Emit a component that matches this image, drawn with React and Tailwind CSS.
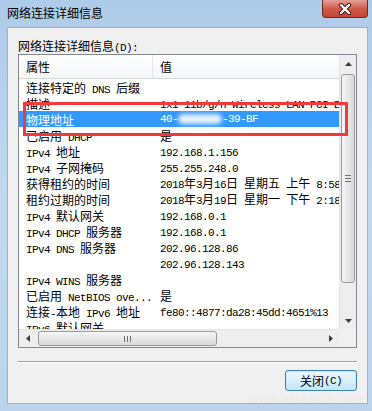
import React from "react";

const CJK = "font-['Noto_Sans_CJK_SC',sans-serif] text-[12px]";
const LAT = "font-['Liberation_Mono',monospace] text-[11px] tracking-[-0.6px]";

function T({ s }) {
  const parts = s.split(/([\u0000-\u00ff]+)/).filter((p) => p !== "");
  return (
    <>
      {parts.map((p, i) =>
        /[\u0000-\u00ff]/.test(p) ? (
          <span key={i} className={LAT + " whitespace-pre"}>
            {p}
          </span>
        ) : (
          <span key={i} className={CJK}>
            {p}
          </span>
        )
      )}
    </>
  );
}

const rows = [
  ["连接特定的 DNS 后缀", ""],
  ["描述", "1x1 11b/g/n Wireless LAN PCI Express Half Mini Card Adapter"],
  ["物理地址", "MAC"],
  ["已启用 DHCP", "是"],
  ["IPv4 地址", "192.168.1.156"],
  ["IPv4 子网掩码", "255.255.248.0"],
  ["获得租约的时间", "2018年3月16日 星期五 上午 8:58:21"],
  ["租约过期的时间", "2018年3月19日 星期一 下午 2:18:21"],
  ["IPv4 默认网关", "192.168.0.1"],
  ["IPv4 DHCP 服务器", "192.168.0.1"],
  ["IPv4 DNS 服务器", "202.96.128.86"],
  ["", "202.96.128.143"],
  ["IPv4 WINS 服务器", ""],
  ["已启用 NetBIOS ove...", "是"],
  ["连接-本地 IPv6 地址", "fe80::4877:da28:45dd:4651%13"],
  ["IPv6 默认网关", ""],
];

function Row({ p, v, sel }) {
  return (
    <div
      className={
        "h-[16px] flex shrink-0 leading-[16px] " +
        (sel ? "bg-[#3399ff] text-white" : "text-black")
      }
    >
      <div className="w-[134px] shrink-0 pl-[7px] overflow-hidden whitespace-nowrap">
        <T s={p} />
      </div>
      <div className="flex-1 pl-[7px] overflow-hidden whitespace-nowrap flex items-center">
        {v === "MAC" ? (
          <>
            <T s="40-" />
            <span className="inline-block w-[44px] h-[10px] bg-[#e6f1ff] blur-[2px] rounded-full" />
            <T s="-39-BF" />
          </>
        ) : (
          <span className="leading-[16px]">
            <T s={v} />
          </span>
        )}
      </div>
    </div>
  );
}

function Tri({ dir }) {
  const pts = {
    up: "0,4 7,4 3.5,0",
    down: "0,0 7,0 3.5,4",
    left: "4,0 4,7 0,3.5",
    right: "0,0 0,7 4,3.5",
  }[dir];
  const w = dir === "up" || dir === "down" ? 7 : 4;
  const h = dir === "up" || dir === "down" ? 4 : 7;
  return (
    <svg width={w} height={h} viewBox={`0 0 ${w} ${h}`}>
      <polygon points={pts} fill="#3c3c3c" />
    </svg>
  );
}

export default function App() {
  return (
    <div className="w-[372px] h-[411px] overflow-hidden relative flex flex-col bg-linear-to-b from-[#aecbe9] via-[#c3d8ee] to-[#bcd3ec]">
      {/* Title bar */}
      <div className="h-[27px] shrink-0 flex justify-between">
        <span className="pl-[7px] pt-[5px] leading-[16px] text-[12px] text-black font-['Noto_Sans_CJK_SC',sans-serif]">
          网络连接详细信息
        </span>
        <div className="mr-[4px] w-[46px] h-[18px] rounded-b-[4px] border border-t-0 border-[#6b2a24] bg-linear-to-b from-[#e3a195] via-[#cf5a4c] to-[#c64434] flex items-center justify-center">
          <svg width="14" height="12" viewBox="0 0 14 12">
            <path d="M3 2 L11 10 M11 2 L3 10" stroke="#4a1a14" strokeWidth="4.2" strokeLinecap="round" />
            <path d="M3 2 L11 10 M11 2 L3 10" stroke="#ffffff" strokeWidth="2.4" strokeLinecap="round" />
          </svg>
        </div>
      </div>

      {/* Client area */}
      <div className="ml-[7px] mr-[4px] h-[377px] shrink-0 bg-[#f0f0f0] border border-[#9fb1c6] pl-[10px] pr-[10px] pt-[9px] flex flex-col">
        <div className="h-[16px] leading-[16px] text-black">
          <T s="网络连接详细信息(D):" />
        </div>

        {/* List box */}
        <div className="mt-[1px] h-[294px] shrink-0 border border-[#828790] bg-white flex">
          <div className="flex-1 min-w-0 flex flex-col">
            <div className="flex-1 overflow-hidden flex flex-col">
              {/* header */}
              <div className="h-[24px] shrink-0 flex border-b border-[#d5d5d5] bg-linear-to-b from-white to-[#f4f6f8]">
                <div className="w-[134px] shrink-0 pl-[7px] border-r border-[#e3e6ea] flex items-center">
                  <span className={CJK + " text-black"}>属性</span>
                </div>
                <div className="flex-1 pl-[7px] flex items-center">
                  <span className={CJK + " text-black"}>值</span>
                </div>
              </div>
              {rows.map((r, i) => (
                <Row key={i} p={r[0]} v={r[1]} sel={i === 2} />
              ))}
            </div>
            {/* horizontal scrollbar */}
            <div className="h-[18px] shrink-0 flex bg-[#eeeeee] border-t border-[#e4e4e4]">
              <div className="w-[17px] shrink-0 flex items-center justify-center">
                <Tri dir="left" />
              </div>
              <div className="w-[2px] shrink-0" />
              <div className="w-[179px] shrink-0 my-[1px] rounded-[3px] border border-[#9b9b9b] bg-linear-to-b from-[#f6f6f6] to-[#d9d9d9] flex items-center justify-center gap-[2px]">
                <span className="w-px h-[6px] bg-[#6f6f6f]" />
                <span className="w-px h-[6px] bg-[#6f6f6f]" />
                <span className="w-px h-[6px] bg-[#6f6f6f]" />
              </div>
              <div className="flex-1" />
              <div className="w-[17px] shrink-0 flex items-center justify-center">
                <Tri dir="right" />
              </div>
            </div>
          </div>
          {/* vertical scrollbar */}
          <div className="w-[17px] shrink-0 flex flex-col">
            <div className="flex-1 flex flex-col bg-[#eeeeee] border-l border-[#e4e4e4]">
              <div className="h-[17px] shrink-0 flex items-center justify-center">
                <Tri dir="up" />
              </div>
              <div className="h-[2px] shrink-0" />
              <div className="h-[209px] shrink-0 mx-[1px] rounded-[3px] border border-[#9b9b9b] bg-linear-to-r from-[#f6f6f6] to-[#d9d9d9] flex flex-col items-center justify-center gap-[2px]">
                <span className="h-px w-[6px] bg-[#6f6f6f]" />
                <span className="h-px w-[6px] bg-[#6f6f6f]" />
                <span className="h-px w-[6px] bg-[#6f6f6f]" />
              </div>
              <div className="flex-1" />
              <div className="h-[17px] shrink-0 flex items-center justify-center">
                <Tri dir="down" />
              </div>
            </div>
            <div className="h-[18px] shrink-0 bg-[#f0f0f0]" />
          </div>
        </div>

        {/* separator */}
        <div className="mt-[13px] h-0 border-t border-[#a0a0a0] border-b border-b-white" />

        {/* button */}
        <div className="mt-[7px] flex justify-end">
          <div className="w-[72px] h-[21px] rounded-[3px] border border-[#3c7fb1] bg-linear-to-b from-[#eaf6fd] via-[#d9f0fc] to-[#bee6fd] shadow-[inset_0_0_0_1px_#c6e9fb] flex items-center justify-center leading-[16px] text-black">
            <T s="关闭(C)" />
          </div>
        </div>
      </div>

      {/* watermark */}
      <div className="absolute right-[9px] bottom-[7px] leading-[10px] text-[13px] font-['Liberation_Sans',sans-serif] font-bold text-[#ececec] pointer-events-none">
        www.xiazaiba.com
      </div>

      {/* red highlight box */}
      <div className="absolute left-[23px] top-[102px] w-[325px] h-[34px] border-[3px] border-[#f23a3a] pointer-events-none" />
    </div>
  );
}
